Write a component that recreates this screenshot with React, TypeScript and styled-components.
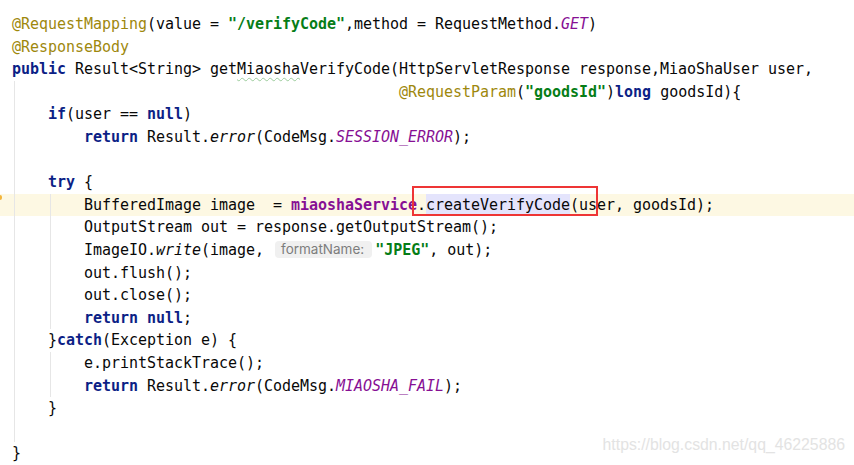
import React from "react";
import styled, { createGlobalStyle } from "styled-components";

const GlobalStyle = createGlobalStyle`
  html, body { margin: 0; padding: 0; background: #ffffff; }
`;

const Editor = styled.div`
  position: relative;
  display: flex;
  flex-direction: column;
  width: 854px;
  height: 465px;
  overflow: hidden;
  box-sizing: border-box;
  padding-top: 13px;
  background: #ffffff;
  font-family: "DejaVu Sans Mono", "Liberation Mono", monospace;
  font-size: 15px;
  letter-spacing: -0.03px;
  color: #080808;
`;

const GUIDE = "#e6e6e6";

const guideLayer = (x: number) =>
  `linear-gradient(to right, transparent ${x}px, ${GUIDE} ${x}px, ${GUIDE} ${x + 1}px, transparent ${x + 1}px)`;

const Line = styled.div<{ $current?: boolean; $guides?: number }>`
  position: relative;
  flex: 0 0 22.6px;
  height: 22.6px;
  line-height: 22.6px;
  padding-left: 12px;
  white-space: pre;
  background-color: ${(p) => (p.$current ? "#fdf8e3" : "transparent")};
  background-image: ${(p) => {
    const n = p.$guides ?? 0;
    if (n === 0) return "none";
    const layers = [guideLayer(14)];
    if (n > 1) layers.push(guideLayer(50));
    return layers.join(", ");
  }};
`;

const Ann = styled.span`
  color: #9e880d;
`;

const Kw = styled.span`
  color: #0c1f86;
  font-weight: bold;
`;

const Str = styled.span`
  color: #067d17;
  font-weight: bold;
`;

const Field = styled.span`
  color: #871094;
  font-weight: bold;
`;

const Static = styled.span`
  color: #871094;
  font-style: italic;
`;

const Ital = styled.span`
  font-style: italic;
`;

const Typo = styled.span`
  text-decoration: underline wavy #9ccb9c;
  text-decoration-thickness: 1px;
  text-underline-offset: 3px;
`;

const Selected = styled.span`
  display: inline-block;
  background: #e4e4fc;
  line-height: 22px;
  vertical-align: top;
`;

const Hint = styled.span`
  display: inline-block;
  margin: 0 3px 0 2px;
  padding: 0 8px 0 6px;
  height: 17px;
  line-height: 17px;
  border-radius: 4px;
  background: #f0f0f0;
  color: #7d7d7d;
  font-family: Inter, "Noto Sans", sans-serif;
  font-size: 13.5px;
  letter-spacing: 0;
  vertical-align: 1px;
`;

const RedBox = styled.span`
  position: absolute;
  left: 412px;
  top: -8px;
  width: 186px;
  height: 30px;
  box-sizing: border-box;
  border: 2px solid #ee3535;
  pointer-events: none;
`;

const GutterMark = styled.span`
  position: absolute;
  left: 0;
  top: 1px;
  width: 2px;
  height: 5px;
  border-radius: 0 2px 2px 0;
  background: #f3b53c;
`;

const Watermark = styled.div`
  position: absolute;
  right: 9px;
  top: 436px;
  font-family: "Liberation Sans", Arial, sans-serif;
  font-size: 15.8px;
  letter-spacing: 0;
  color: #e3e3e3;
  white-space: nowrap;
`;

export default function App() {
  return (
    <>
      <GlobalStyle />
      <Editor>
        <Line>
          <Ann>@RequestMapping</Ann>(value = <Str>"/verifyCode"</Str>,method = RequestMethod.<Static>GET</Static>)
        </Line>
        <Line>
          <Ann>@ResponseBody</Ann>
        </Line>
        <Line>
          <Kw>public</Kw> Result&lt;String&gt; get<Typo>Miaosha</Typo>VerifyCode(HttpServletResponse response,MiaoShaUser user,
        </Line>
        <Line $guides={1}>
          {"                                           "}
          <Ann>@RequestParam</Ann>(<Str>"goodsId"</Str>)<Kw>long</Kw> goodsId){"{"}
        </Line>
        <Line $guides={1}>
          {"    "}
          <Kw>if</Kw>(user == <Kw>null</Kw>)
        </Line>
        <Line $guides={1}>
          {"        "}
          <Kw>return</Kw> Result.<Ital>error</Ital>(CodeMsg.<Static>SESSION_ERROR</Static>);
        </Line>
        <Line $guides={1} />
        <Line $guides={1}>
          {"    "}
          <Kw>try</Kw> {"{"}
        </Line>
        <Line $current $guides={2}>
          <GutterMark />
          {"        BufferedImage image  = "}
          <Field>miaoshaService</Field>.<Selected>createVerifyCode</Selected>(user, goodsId);
          <RedBox />
        </Line>
        <Line $guides={2}>{"        OutputStream out = response.getOutputStream();"}</Line>
        <Line $guides={2}>
          {"        ImageIO."}
          <Ital>write</Ital>(image, <Hint>formatName:</Hint>
          <Str>"JPEG"</Str>, out);
        </Line>
        <Line $guides={2}>{"        out.flush();"}</Line>
        <Line $guides={2}>{"        out.close();"}</Line>
        <Line $guides={2}>
          {"        "}
          <Kw>return</Kw> <Kw>null</Kw>;
        </Line>
        <Line $guides={1}>
          {"    }"}
          <Kw>catch</Kw>(Exception e) {"{"}
        </Line>
        <Line $guides={2}>{"        e.printStackTrace();"}</Line>
        <Line $guides={2}>
          {"        "}
          <Kw>return</Kw> Result.<Ital>error</Ital>(CodeMsg.<Static>MIAOSHA_FAIL</Static>);
        </Line>
        <Line $guides={1}>{"    }"}</Line>
        <Line $guides={1} />
        <Line>{"}"}</Line>
        <Watermark>https://blog.csdn.net/qq_46225886</Watermark>
      </Editor>
    </>
  );
}
